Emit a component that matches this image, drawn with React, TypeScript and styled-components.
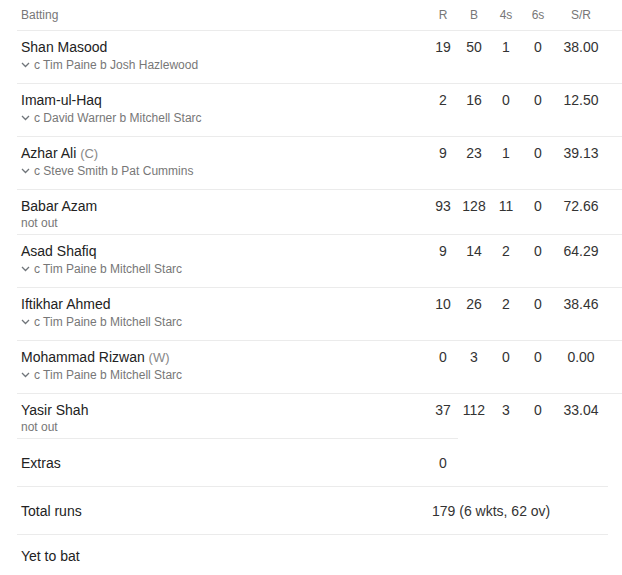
import React from "react";
import styled, { createGlobalStyle } from "styled-components";

const GlobalStyle = createGlobalStyle`
    body {
        margin: 0;
        background: #fff;
        font-family: "Liberation Sans", Arial, sans-serif;
        color: #222;
    }
`;

// grid of the batting columns
const columns = "411px 30px 32px 32px 32px 54px";

const Page = styled.div`
    padding-left: 17px;
    overflow: hidden;
`;

const Table = styled.div`
    width: 605px;
`;

const HeaderRow = styled.div`
    display: grid;
    grid-template-columns: ${columns};
    align-items: center;
    height: 30px;
    border-bottom: 1px solid #ebebeb;
    font-size: 12px;
    color: #777;
`;

const HeaderCell = styled.div<{ $left?: boolean }>`
    text-align: ${({ $left }) => ($left ? "left" : "center")};
    padding-left: ${({ $left }) => ($left ? "4px" : "0")};
`;

const Row = styled.div<{ $last?: boolean; $short?: boolean }>`
    display: grid;
    grid-template-columns: ${columns};
    align-items: start;
    padding: 8px 0 ${({ $short }) => ($short ? "4px" : "9px")};
    border-bottom: ${({ $last }) => ($last ? "none" : "1px solid #ebebeb")};
`;

const NameCell = styled.div`
    padding-left: 4px;
`;

const Name = styled.div`
    font-size: 14px;
    line-height: 17px;
    color: #222;
`;

const Role = styled.span`
    font-size: 13px;
    color: #888;
`;

const Dismissal = styled.div<{ $out?: boolean }>`
    display: flex;
    align-items: center;
    gap: 4px;
    font-size: 12px;
    line-height: ${({ $out }) => ($out ? "18px" : "14px")};
    color: #777;
    margin-top: ${({ $out }) => ($out ? "0" : "1px")};
`;

const Stat = styled.div`
    font-size: 14px;
    line-height: 17px;
    text-align: center;
    color: #333;
    white-space: nowrap;
`;

const Divider = styled.div`
    width: 441px;
    height: 1px;
    background: #ebebeb;
`;

const SummaryRow = styled.div<{ $border?: boolean }>`
    display: grid;
    grid-template-columns: 411px 1fr;
    align-items: center;
    width: 591px;
    height: ${({ $border }) => ($border ? "47px" : "42px")};
    font-size: 14px;
    color: #222;
    border-bottom: ${({ $border }) => ($border ? "1px solid #ebebeb" : "none")};
`;

const SummaryLabel = styled.div`
    padding-left: 4px;
`;

const SummaryValue = styled.div<{ $centered?: boolean }>`
    color: #333;
    ${({ $centered }) => ($centered ? "width: 30px; text-align: center;" : "padding-left: 4px;")}
`;

const Chevron = () => (
    <svg width="9" height="6" viewBox="0 0 9 6" fill="none">
        <path d="M1 1l3.5 3.5L8 1" stroke="#70757a" strokeWidth="1.3" />
    </svg>
);

type Batter = {
    name: string;
    role?: string;
    howOut?: string;
    r: number;
    b: number;
    fours: number;
    sixes: number;
    sr: string;
};

const batters: Batter[] = [
    { name: "Shan Masood", howOut: "c Tim Paine b Josh Hazlewood", r: 19, b: 50, fours: 1, sixes: 0, sr: "38.00" },
    { name: "Imam-ul-Haq", howOut: "c David Warner b Mitchell Starc", r: 2, b: 16, fours: 0, sixes: 0, sr: "12.50" },
    { name: "Azhar Ali", role: "(C)", howOut: "c Steve Smith b Pat Cummins", r: 9, b: 23, fours: 1, sixes: 0, sr: "39.13" },
    { name: "Babar Azam", r: 93, b: 128, fours: 11, sixes: 0, sr: "72.66" },
    { name: "Asad Shafiq", howOut: "c Tim Paine b Mitchell Starc", r: 9, b: 14, fours: 2, sixes: 0, sr: "64.29" },
    { name: "Iftikhar Ahmed", howOut: "c Tim Paine b Mitchell Starc", r: 10, b: 26, fours: 2, sixes: 0, sr: "38.46" },
    { name: "Mohammad Rizwan", role: "(W)", howOut: "c Tim Paine b Mitchell Starc", r: 0, b: 3, fours: 0, sixes: 0, sr: "0.00" },
    { name: "Yasir Shah", r: 37, b: 112, fours: 3, sixes: 0, sr: "33.04" },
];

export default function App() {
    return (
        <>
            <GlobalStyle />
            <Page>
                <Table>
                    <HeaderRow>
                        <HeaderCell $left>Batting</HeaderCell>
                        <HeaderCell>R</HeaderCell>
                        <HeaderCell>B</HeaderCell>
                        <HeaderCell>4s</HeaderCell>
                        <HeaderCell>6s</HeaderCell>
                        <HeaderCell>S/R</HeaderCell>
                    </HeaderRow>
                    {batters.map((p, i) => (
                        <Row key={p.name} $short={!p.howOut} $last={i === batters.length - 1}>
                            <NameCell>
                                <Name>
                                    {p.name} {p.role && <Role>{p.role}</Role>}
                                </Name>
                                {p.howOut ? (
                                    <Dismissal $out>
                                        <Chevron />
                                        {p.howOut}
                                    </Dismissal>
                                ) : (
                                    <Dismissal>not out</Dismissal>
                                )}
                            </NameCell>
                            <Stat>{p.r}</Stat>
                            <Stat>{p.b}</Stat>
                            <Stat>{p.fours}</Stat>
                            <Stat>{p.sixes}</Stat>
                            <Stat>{p.sr}</Stat>
                        </Row>
                    ))}
                </Table>
                <Divider />
                <SummaryRow $border>
                    <SummaryLabel>Extras</SummaryLabel>
                    <SummaryValue $centered>0</SummaryValue>
                </SummaryRow>
                <SummaryRow $border>
                    <SummaryLabel>Total runs</SummaryLabel>
                    <SummaryValue>179 (6 wkts, 62 ov)</SummaryValue>
                </SummaryRow>
                <SummaryRow>
                    <SummaryLabel>Yet to bat</SummaryLabel>
                </SummaryRow>
            </Page>
        </>
    );
}
